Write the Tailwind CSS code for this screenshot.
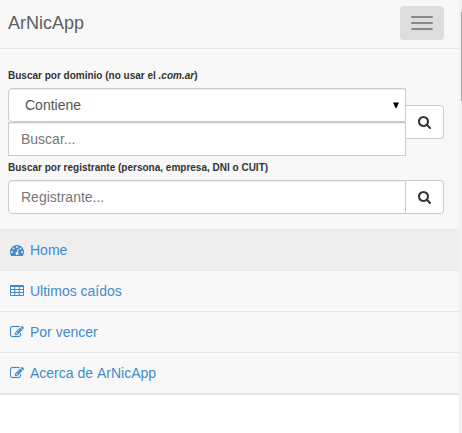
<!DOCTYPE html>
<html lang="es">
<head>
<meta charset="utf-8">
<title>ArNicApp</title>
<script src="https://cdn.jsdelivr.net/npm/@tailwindcss/browser@4"></script>
</head>
<body class="flex h-[433px] w-[462px] overflow-hidden bg-white font-['Liberation_Sans',Arial,sans-serif] text-sm leading-5 text-[#333]">
<svg class="hidden">
  <symbol id="search" viewBox="64 128 1664 1664"><path d="M1216 832q0-185-131.5-316.5t-316.5-131.5-316.5 131.5-131.5 316.5 131.5 316.5 316.5 131.5 316.5-131.5 131.5-316.5zm512 832q0 52-38 90t-90 38q-54 0-90-38l-343-342q-179 124-399 124-143 0-273.5-55.5t-225-150-150-225-55.5-273.5 55.5-273.5 150-225 225-150 273.5-55.5 273.5 55.5 225 150 150 225 55.5 273.5q0 220-124 399l343 343q37 37 37 90z"/></symbol>
  <symbol id="edit" viewBox="0 0 1792 1792"><path stroke="currentColor" stroke-width="24" d="M888 1184l116-116-152-152-116 116v56h96v96h56zm440-720q-16-16-33 1l-350 350q-17 17-1 33t33-1l350-350q17-17 1-33zm80 594v190q0 119-84.5 203.5t-203.5 84.5h-832q-119 0-203.5-84.5t-84.5-203.5v-832q0-119 84.5-203.5t203.5-84.5h832q63 0 117 25 15 7 18 23 3 17-9 29l-49 49q-14 14-32 8-23-6-45-6h-832q-66 0-113 47t-47 113v832q0 66 47 113t113 47h832q66 0 113-47t47-113v-126q0-13 9-22l64-64q15-15 35-7t20 29zm-96-738l288 288-672 672h-288v-288zm444 132l-92 92-288-288 92-92q28-28 68-28t68 28l152 152q28 28 28 68t-28 68z"/></symbol>
  <symbol id="gauge" viewBox="0 0 1792 1792"><path fill-rule="evenodd" d="M1792 1152q0 261-141 483-19 29-54 29H195q-35 0-54-29Q0 1414 0 1152q0-182 71-348t191-286 286-191 348-71 348 71 286 191 191 286 71 348zM128 1152a128 128 0 1 0 256 0a128 128 0 1 0-256 0zM320 704a128 128 0 1 0 256 0a128 128 0 1 0-256 0zM768 512a128 128 0 1 0 256 0a128 128 0 1 0-256 0zM1216 704a128 128 0 1 0 256 0a128 128 0 1 0-256 0zM1408 1152a128 128 0 1 0 256 0a128 128 0 1 0-256 0zM1004 1185l101-382q6-26-7.500-48.500t-38.500-29.500-48 6.500-30 39.500l-101 382q-60 5-107 43.500t-63 98.500q-20 77 20 146t117 89 146-20 89-117q16-60-6-117t-72-91z"/></symbol>
  <symbol id="table" viewBox="0 1 14 14"><path fill-rule="evenodd" d="M1 2H13Q14 2 14 3V12Q14 13 13 13H1Q0 13 0 12V3Q0 2 1 2ZM1 4V6H4.300V4ZM5.300 4V6H8.700V4ZM9.700 4V6H13V4ZM1 7V9H4.300V7ZM5.300 7V9H8.700V7ZM9.700 7V9H13V7ZM1 10V12H4.300V10ZM5.300 10V12H8.700V10ZM9.700 10V12H13V10Z"/></symbol>
</svg>

<div class="w-[459px]">
  <nav class="border-b-2 border-[#e5e5e5] bg-[#f8f8f8]">
    <header class="flex h-[49px] items-start justify-between border-b border-[#e7e7e7] pr-[15px] pl-2">
      <a class="pt-[13px] text-lg leading-5 text-[#5e5e5e]">ArNicApp</a>
      <button aria-label="Menú" class="mt-[6px] flex h-[34px] w-11 flex-col items-center justify-center gap-1 rounded bg-[#ddd]">
        <span class="h-0.5 w-[22px] rounded-[1px] bg-[#888]"></span>
        <span class="h-0.5 w-[22px] rounded-[1px] bg-[#888]"></span>
        <span class="h-0.5 w-[22px] rounded-[1px] bg-[#888]"></span>
      </button>
    </header>

    <form class="h-[180px] pt-[17px] pr-[15px] pl-2">
      <label class="block h-[22px] text-[10px] leading-5 font-bold">Buscar por dominio (no usar el <i>.com.ar</i>)</label>
      <div class="flex items-center">
        <div class="w-[398px]">
          <div class="flex h-[34px] items-center justify-between rounded-l border border-[#ccc] bg-white pr-[6px] pl-4 text-[#555] shadow-[inset_0_1px_1px_rgba(0,0,0,0.075)]">
            <span>Contiene</span>
            <svg class="h-[7px] w-[6px] fill-black" viewBox="0 0 6 7"><path d="M0 .5H6L3.500 6H2.500Z"/></svg>
          </div>
          <input placeholder="Buscar..." class="block h-[34px] w-full border border-[#ccc] bg-white px-3 shadow-[inset_0_1px_1px_rgba(0,0,0,0.075)] placeholder:text-[#777]">
        </div>
        <button type="button" aria-label="Buscar" class="flex h-[34px] w-[38px] items-start rounded-r border border-l-0 border-[#ccc] bg-white pt-[10px] pl-3"><svg class="size-[13px] fill-[#333]"><use href="#search"/></svg></button>
      </div>
      <label class="block h-6 pt-0.5 text-[10px] leading-5 font-bold">Buscar por registrante (persona, empresa, DNI o CUIT)</label>
      <div class="flex">
        <input placeholder="Registrante..." class="block h-[34px] w-[398px] rounded-l border border-[#ccc] bg-white px-3 shadow-[inset_0_1px_1px_rgba(0,0,0,0.075)] placeholder:text-[#777]">
        <button type="button" aria-label="Buscar registrante" class="flex h-[34px] w-[38px] items-start rounded-r border border-l-0 border-[#ccc] bg-white pt-[10px] pl-3"><svg class="size-[13px] fill-[#333]"><use href="#search"/></svg></button>
      </div>
    </form>

    <ul class="fill-[#428bca] text-[#428bca]">
      <li class="flex h-[41px] items-center gap-[6px] border-t border-[#e7e7e7] bg-[#eee] pl-[10px]"><svg class="size-[14px]"><use href="#gauge"/></svg><a>Home</a></li>
      <li class="flex h-[41px] items-center gap-[6px] border-t border-[#e7e7e7] pl-[10px]"><svg class="size-[14px]"><use href="#table"/></svg><a>Ultimos caídos</a></li>
      <li class="flex h-[41px] items-center gap-[6px] border-t border-[#e7e7e7] pl-[10px]"><svg class="size-[14px]"><use href="#edit"/></svg><a>Por vencer</a></li>
      <li class="flex h-[41px] items-center gap-[6px] border-t border-[#e7e7e7] pl-[10px]"><svg class="size-[14px]"><use href="#edit"/></svg><a>Acerca de <span class="inline-block">ArNicApp</span></a></li>
    </ul>
  </nav>
</div>
<div class="flex w-[3px] justify-end bg-[#f1f1f1] pt-3"><div class="h-[89px] w-px bg-[#a8a8a8]"></div></div>
</body>
</html>
